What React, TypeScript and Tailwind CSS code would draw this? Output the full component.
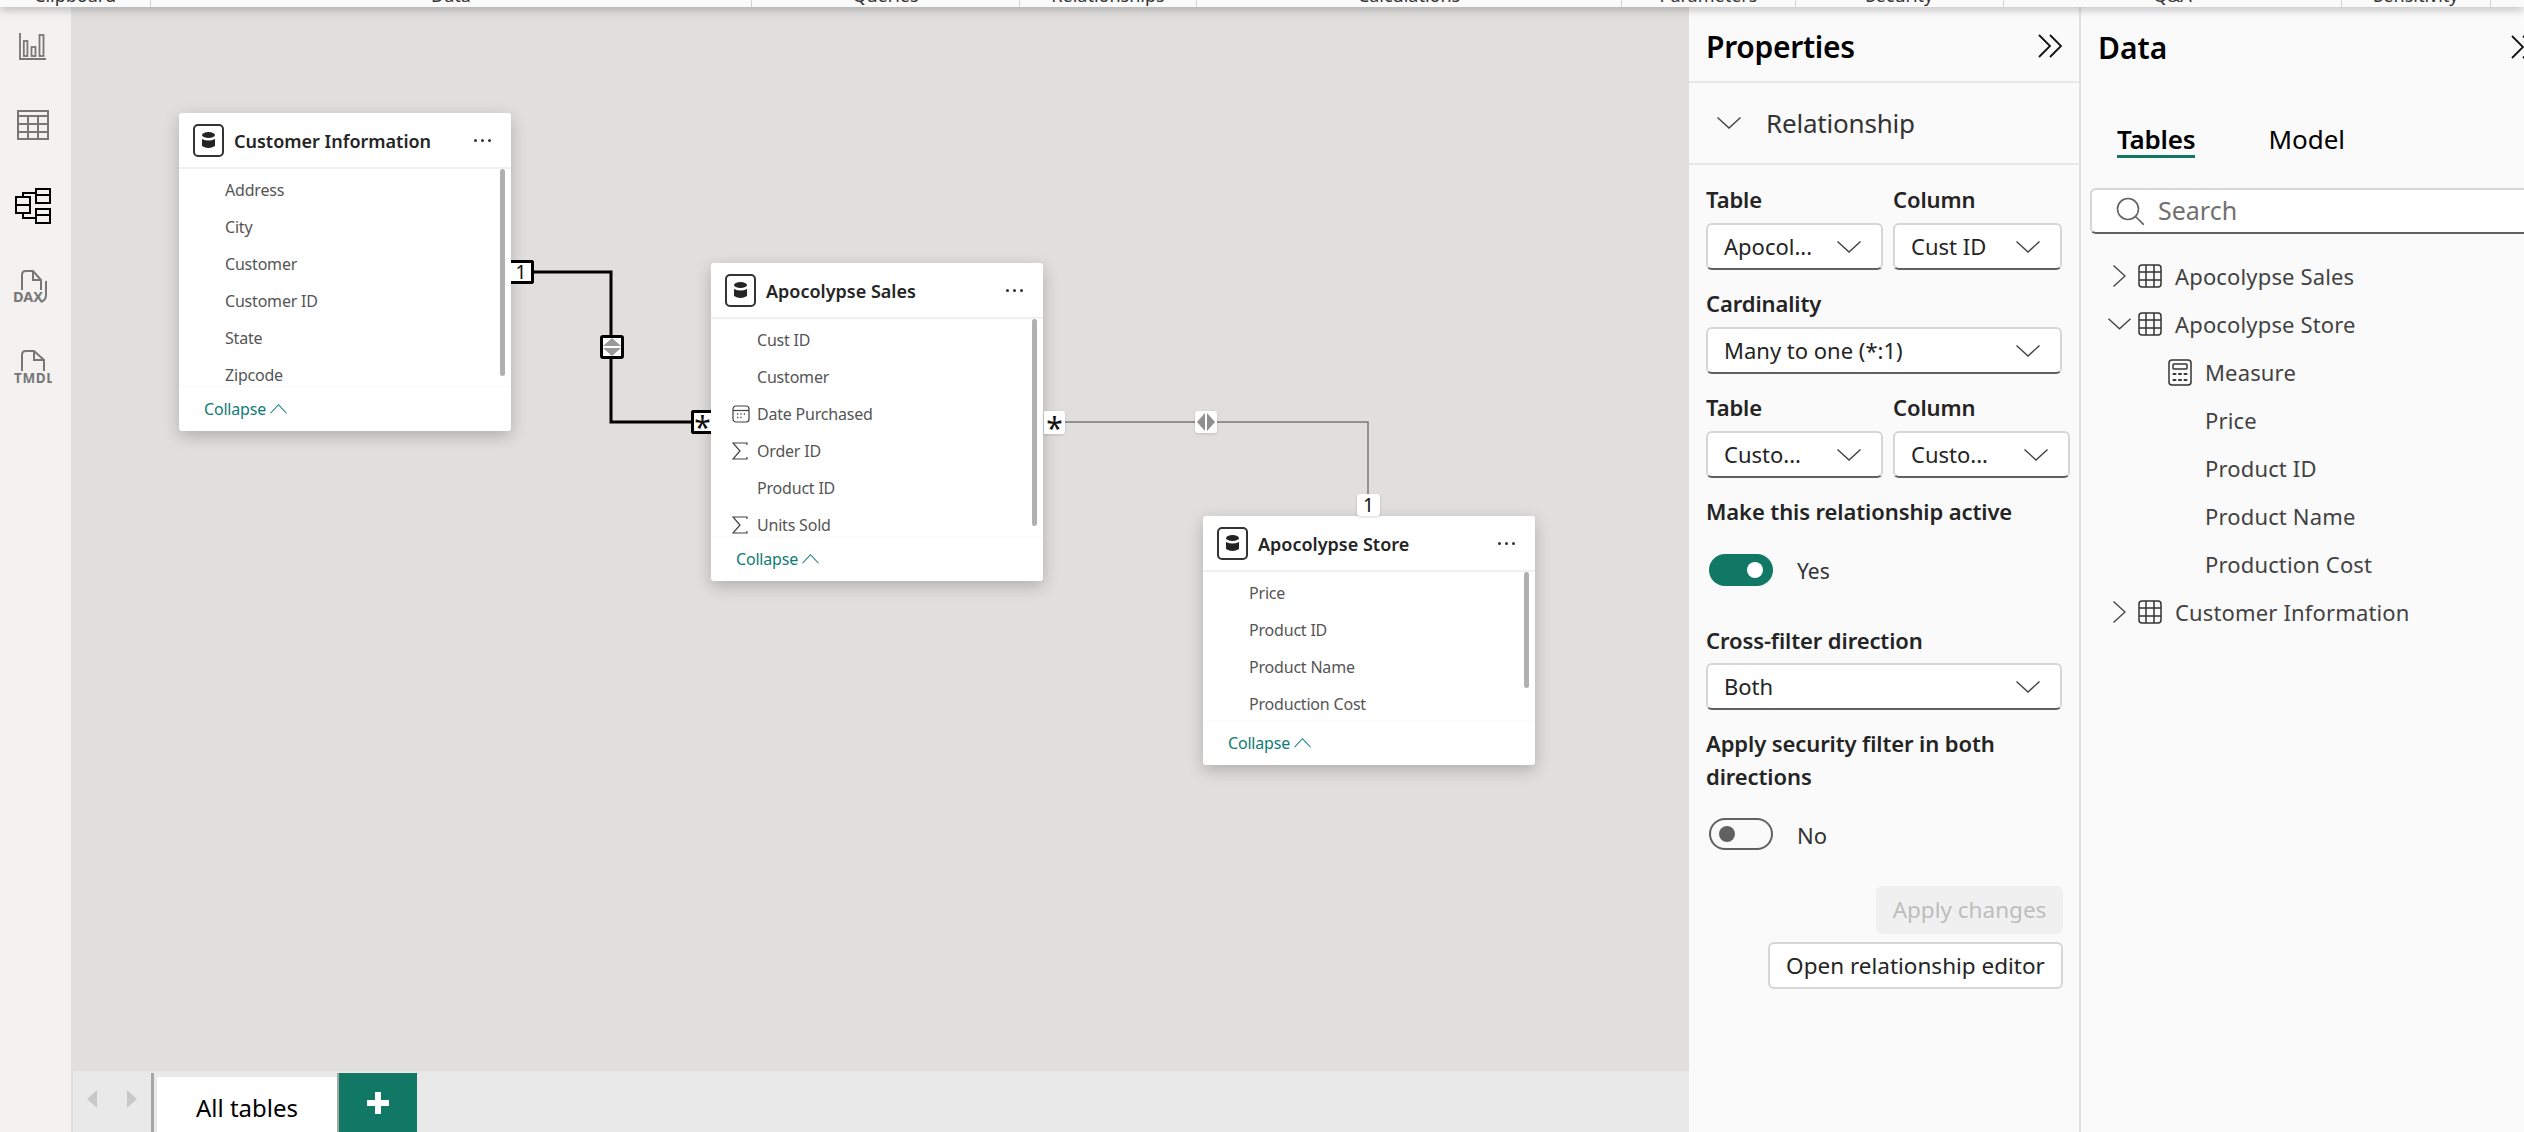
import { ReactNode } from 'react';

const font = '[font-family:"Noto_Sans",sans-serif]';

const ribbonGroups = [
  { label: 'Clipboard', width: 'w-[151px]' },
  { label: 'Data', width: 'w-[601px]' },
  { label: 'Queries', width: 'w-[268px]' },
  { label: 'Relationships', width: 'w-[177px]' },
  { label: 'Calculations', width: 'w-[425px]' },
  { label: 'Parameters', width: 'w-[174px]' },
  { label: 'Security', width: 'w-[208px]' },
  { label: 'Q&A', width: 'w-[338px]' },
  { label: 'Sensitivity', width: 'w-[149px]' },
];

function Chevron({ className = 'w-6 h-3' }: { className?: string }) {
  return (
    <svg viewBox="0 0 24 12" className={className} fill="none" stroke="#424242" strokeWidth="1.4">
      <path d="M0.5 0.5 L12 11 L23.5 0.5" />
    </svg>
  );
}

function ChevronRight() {
  return (
    <svg viewBox="0 0 13 22" className="w-[13px] h-[22px]" fill="none" stroke="#424242" strokeWidth="1.3">
      <path d="M0.5 0.5 L12 11 L0.5 21.5" />
    </svg>
  );
}

function ReportIcon() {
  return (
    <svg viewBox="0 0 27 27" className="w-[27px] h-[27px]" fill="none" stroke="#777" strokeWidth="1.8">
      <path d="M1 0 V26 H27" />
      <rect x="4.8" y="8" width="3.6" height="15" />
      <rect x="12.5" y="14" width="4" height="9" />
      <rect x="20.5" y="2" width="4" height="21" />
    </svg>
  );
}

function TableIcon() {
  return (
    <svg viewBox="0 0 32 30" className="w-8 h-[30px]" fill="none" stroke="#777" strokeWidth="2">
      <rect x="1" y="1" width="30" height="28" />
      <path d="M1 6 H31 M1 14 H31 M1 22 H31 M11 6 V29 M21 6 V29" />
    </svg>
  );
}

function ModelIcon() {
  return (
    <svg viewBox="0 0 36 36" className="w-9 h-9" fill="none" stroke="#000" strokeWidth="2">
      <rect x="1" y="9" width="14" height="16" />
      <path d="M1 17 H15" />
      <rect x="21" y="1" width="14" height="14" />
      <path d="M21 7 H35" />
      <rect x="21" y="21" width="14" height="14" />
      <path d="M21 27 H35" />
      <path d="M8 9 V5 H21 M8 25 V30 H21" />
    </svg>
  );
}

function DaxIcon() {
  return (
    <svg viewBox="0 0 35 33" className="w-[35px] h-[33px]" fill="none" stroke="#777" strokeWidth="2">
      <path d="M9 20 V5 Q9 1 13 1 H20 L28 10 V20 M20 1 V10 H28" />
      <path d="M33 11 V25 Q33 30 28 32" />
      <text x="0" y="32" fontSize="14.5" fontWeight="700" fill="#777" stroke="none" fontFamily="Noto Sans, sans-serif">DAX</text>
    </svg>
  );
}

function TmdlIcon() {
  return (
    <svg viewBox="0 0 38 33" className="w-[38px] h-[33px]" fill="none" stroke="#777" strokeWidth="2">
      <path d="M8 21 V5 Q8 1 12 1 H20 L30 10 V21 M20 1 V10 H30" />
      <text x="0" y="33" fontSize="13.5" fontWeight="700" fill="#777" stroke="none" letterSpacing="0.6" fontFamily="Noto Sans, sans-serif">TMDL</text>
    </svg>
  );
}

function CylinderIcon() {
  return (
    <svg viewBox="0 0 31 33" className="w-[31px] h-[33px] shrink-0" fill="none">
      <rect x="1" y="1" width="29" height="31" rx="4" stroke="#333" strokeWidth="2" />
      <ellipse cx="15.5" cy="11" rx="6.5" ry="3" fill="#242424" />
      <path d="M9 15 Q15.5 18 22 15 V22 Q15.5 26 9 22 Z" fill="#242424" />
    </svg>
  );
}

function SigmaIcon() {
  return (
    <svg viewBox="0 0 16 18" className="w-4 h-[18px]" fill="none" stroke="#424242" strokeWidth="1.2">
      <path d="M15 3 V1 H1 L8 9 L1 17 H15 V15" />
    </svg>
  );
}

function CalendarIcon() {
  return (
    <svg viewBox="0 0 18 18" className="w-[18px] h-[18px]" fill="none" stroke="#424242" strokeWidth="1.2">
      <rect x="1" y="1" width="16" height="16" rx="3" />
      <path d="M1 5.5 H17" />
      <path d="M5 9 h1.2 M8.4 9 h1.2 M11.8 9 h1.2 M5 12.5 h1.2 M8.4 12.5 h1.2" strokeWidth="1.4" />
    </svg>
  );
}

function GridIcon() {
  return (
    <svg viewBox="0 0 24 24" className="w-6 h-6" fill="none" stroke="#333" strokeWidth="1.5">
      <rect x="1" y="1" width="22" height="22" rx="3" />
      <path d="M8 1 V23 M16 1 V23 M1 8 H23 M1 16 H23" />
    </svg>
  );
}

function MeasureIcon() {
  return (
    <svg viewBox="0 0 24 27" className="w-6 h-[27px]" fill="none" stroke="#333" strokeWidth="1.5">
      <rect x="1" y="1" width="22" height="25" rx="3" />
      <rect x="5" y="5" width="14" height="5" rx="1" />
      <path d="M5.5 15 h2 M11 15 h2 M16.5 15 h2 M5.5 21 h2 M11 21 h2 M16.5 21 h2" strokeWidth="2" strokeLinecap="round" />
    </svg>
  );
}

type Field = { name: string; icon?: 'sigma' | 'calendar' };

function TableCard({ title, fields, position, listHeight, scrollHeight }: { title: string; fields: Field[]; position: string; listHeight: string; scrollHeight: string }) {
  return (
    <div className={`absolute w-[332px] bg-white rounded-[3px] shadow-[0_5px_16px_rgba(0,0,0,0.22)] ${position}`}>
      <div className="h-14 flex items-center pl-3.5 border-b-2 border-[#f0f0f0]">
        <CylinderIcon />
        <span className="ml-[10px] mt-[3px] text-[18px] font-semibold text-[#242424]">{title}</span>
        <span className="ml-auto mr-5 flex gap-1">
          <i className="w-[3px] h-[3px] rounded-full bg-[#333]" />
          <i className="w-[3px] h-[3px] rounded-full bg-[#333]" />
          <i className="w-[3px] h-[3px] rounded-full bg-[#333]" />
        </span>
      </div>
      <div className={`relative overflow-hidden pt-[2px] ${listHeight}`}>
        {fields.map((f) => (
          <div key={f.name} className="h-[37px] flex items-center text-[#555] text-[16px] tracking-[-0.2px]">
            <span className="w-[46px] pl-[21px] flex justify-start">
              {f.icon === 'sigma' && <SigmaIcon />}
              {f.icon === 'calendar' && <CalendarIcon />}
            </span>
            {f.name}
          </div>
        ))}
        <div className={`absolute right-[6px] top-0 w-[5px] rounded-full bg-[#b0b0b0] ${scrollHeight}`} />
      </div>
      <div className="h-[45px] flex items-center pl-[25px] gap-1 text-[#0f7b78] text-[16px] tracking-[-0.2px] border-t border-[#fafafa]">
        Collapse
        <svg viewBox="0 0 18 10" className="w-[17px] h-[10px]" fill="none" stroke="#0f7b78" strokeWidth="1.1">
          <path d="M0.5 9.5 L9 0.5 L17.5 9.5" />
        </svg>
      </div>
    </div>
  );
}

function Badge({ position, active, children }: { position: string; active?: boolean; children: ReactNode }) {
  return (
    <div
      className={`absolute flex items-center justify-center overflow-hidden bg-white rounded-[3px] text-[#111] ${
        active ? 'border-[3px] border-black' : 'shadow-[0_1px_3px_rgba(0,0,0,0.15)]'
      } ${position}`}
    >
      {children}
    </div>
  );
}

function FieldLabel({ children, className = '' }: { children: ReactNode; className?: string }) {
  return <div className={`text-[22px] leading-6 font-semibold text-[#242424] tracking-[-0.1px] ${className}`}>{children}</div>;
}

function Select({ value, width }: { value: string; width: string }) {
  return (
    <div className={`h-[47px] ${width} bg-white rounded-md border-2 border-[#d6d6d6] border-b-[#616161] flex items-center justify-between pl-[16px] pr-5 text-[22px] text-[#242424]`}>
      <span>{value}</span>
      <Chevron />
    </div>
  );
}

function TreeRow({ label, arrow, icon, indent }: { label: string; arrow?: 'right' | 'down'; icon?: ReactNode; indent?: boolean }) {
  return (
    <div className="h-12 flex items-center text-[22px] text-[#424242] tracking-[0.15px]">
      <span className="w-[57px] pl-[27px] flex justify-center pr-[7px]">
        {arrow === 'right' && <ChevronRight />}
        {arrow === 'down' && <Chevron className="w-[23px] h-3 shrink-0" />}
      </span>
      {indent ? (
        <span className="w-[30px] ml-[30px] mr-[7px] flex">{icon}</span>
      ) : (
        <span className="w-[37px] flex">{icon}</span>
      )}
      {label}
    </div>
  );
}

export default function App() {
  return (
    <div className={`w-screen h-screen overflow-hidden flex flex-col bg-white ${font}`}>
      <div className="relative z-10 h-[7px] shrink-0 flex overflow-hidden bg-[#fafafa] shadow-[0_2px_10px_rgba(0,0,0,0.3)]">
        {ribbonGroups.map((g) => (
          <div key={g.label} className={`${g.width} shrink-0 h-[7px] border-r border-[#d4d4d4] text-center text-[18px] leading-6 text-[#333]`}>
            <div className="-mt-[17px]">{g.label}</div>
          </div>
        ))}
      </div>

      <div className="flex-1 flex min-h-0">
        <nav className="w-[71px] shrink-0 bg-[#f3f2f1] flex flex-col">
          <div className="h-[79px] pl-[19px] flex items-center"><ReportIcon /></div>
          <div className="h-[78px] pl-[17px] flex items-center"><TableIcon /></div>
          <div className="h-[84px] pl-[15px] flex items-center"><ModelIcon /></div>
          <div className="h-[76px] pl-[13px] flex items-center"><DaxIcon /></div>
          <div className="h-[84px] pl-[14px] flex items-center"><TmdlIcon /></div>
        </nav>

        <main className="w-[1618px] shrink-0 flex flex-col bg-[#e0dfdd]">
          <div className="relative flex-1">
            <svg className="absolute inset-0 w-full h-full" fill="none">
              <path d="M463 265 H540 V415 H625" stroke="#000" strokeWidth="3" />
              <path d="M994 415 H1297 V490" stroke="#777" strokeWidth="1.5" />
            </svg>

            <TableCard
              title="Customer Information"
              position="left-[108px] top-[106px]"
              listHeight="h-[217px]"
              scrollHeight="h-[207px]"
              fields={[{ name: 'Address' }, { name: 'City' }, { name: 'Customer' }, { name: 'Customer ID' }, { name: 'State' }, { name: 'Zipcode' }]}
            />
            <TableCard
              title="Apocolypse Sales"
              position="left-[640px] top-[256px]"
              listHeight="h-[217px]"
              scrollHeight="h-[207px]"
              fields={[
                { name: 'Cust ID' },
                { name: 'Customer' },
                { name: 'Date Purchased', icon: 'calendar' },
                { name: 'Order ID', icon: 'sigma' },
                { name: 'Product ID' },
                { name: 'Units Sold', icon: 'sigma' },
              ]}
            />
            <TableCard
              title="Apocolypse Store"
              position="left-[1132px] top-[509px]"
              listHeight="h-[148px]"
              scrollHeight="h-[116px]"
              fields={[{ name: 'Price' }, { name: 'Product ID' }, { name: 'Product Name' }, { name: 'Production Cost' }]}
            />

            <Badge active position="left-[440px] top-[253px] w-[23px] h-[24px] rounded-l-none border-l-0 text-[19px]">1</Badge>
            <Badge active position="left-[529px] top-[328px] w-[24px] h-[24px]">
              <svg viewBox="0 0 18 18" className="w-[18px] h-[18px] shrink-0" fill="#9a9a9a">
                <path d="M9 0 L18 8 H0 Z M9 18 L18 10 H0 Z" />
              </svg>
            </Badge>
            <Badge active position="left-[620px] top-[403px] w-[20px] h-[24px] rounded-r-none border-r-0 text-[30px] leading-none">
              <span className="mt-[9px]">*</span>
            </Badge>
            <Badge position="left-[973px] top-[404px] w-[21px] h-[23px] rounded-l-none text-[30px] leading-none">
              <span className="mt-[10px]">*</span>
            </Badge>
            <Badge position="left-[1124px] top-[404px] w-[22px] h-[22px]">
              <svg viewBox="0 0 18 18" className="w-[18px] h-[18px]" fill="#8f8f8f">
                <path d="M8 0 V18 L0 9 Z M10 0 V18 L18 9 Z" />
              </svg>
            </Badge>
            <Badge position="left-[1286px] top-[487px] w-[23px] h-[22px] text-[19px]">1</Badge>
          </div>

          <div className="h-[61px] shrink-0 ml-[2px] bg-[#e9e9e9] flex items-end">
            <div className="w-[78px] h-[59px] flex items-center justify-between px-[14px] pb-[8px]">
              <svg viewBox="0 0 10 18" className="w-[10px] h-[18px]" fill="#c8c8c8"><path d="M10 0 V18 L0 9 Z" /></svg>
              <svg viewBox="0 0 10 18" className="w-[10px] h-[18px]" fill="#c8c8c8"><path d="M0 0 V18 L10 9 Z" /></svg>
            </div>
            <div className="w-[3px] h-[59px] bg-[#a6a6a6]" />
            <div className="w-[180px] h-[55px] ml-[3px] pt-[6px] bg-white flex items-center justify-center text-[24px] text-black">All tables</div>
            <div className="w-[2px] h-[59px] bg-[#a6a6a6]" />
            <div className="w-[78px] h-[59px] bg-[#117865] flex items-center justify-center">
              <svg viewBox="0 0 22 22" className="w-[22px] h-[22px]" fill="#fff"><path d="M8 0 H14 V8 H22 V14 H14 V22 H8 V14 H0 V8 H8 Z" /></svg>
            </div>
          </div>
        </main>

        <aside className="w-[392px] shrink-0 bg-[#fafafa] border-r-2 border-[#e1e1e1] flex flex-col">
          <div className="h-[76px] shrink-0 pt-1 border-b-2 border-[#e8e8e8] flex items-center justify-between pl-[17px] pr-4">
            <span className="text-[30px] font-semibold text-black tracking-[-0.3px]">Properties</span>
            <svg viewBox="0 0 25 24" className="w-[25px] h-6" fill="none" stroke="#111" strokeWidth="1.8">
              <path d="M1 1 L12 12 L1 23 M12 1 L23 12 L12 23" />
            </svg>
          </div>
          <div className="h-[82px] shrink-0 border-b-2 border-[#e8e8e8] flex items-center pl-[28px] text-[26px] text-[#333]">
            <Chevron />
            <span className="ml-[25px] tracking-[-0.2px]">Relationship</span>
          </div>

          <div className="px-[17px] pt-[22px]">
            <div className="flex gap-[10px] w-[370px]">
              <div>
                <FieldLabel>Table</FieldLabel>
                <div className="h-[12px]" />
                <Select value="Apocol..." width="w-[177px]" />
              </div>
              <div>
                <FieldLabel>Column</FieldLabel>
                <div className="h-[12px]" />
                <Select value="Cust ID" width="w-[169px]" />
              </div>
            </div>
            <FieldLabel className="mt-[21px]">Cardinality</FieldLabel>
            <Select value="Many to one (*:1)" width="w-[356px] mt-[12px]" />
            <div className="flex gap-[10px] mt-[21px]">
              <div>
                <FieldLabel>Table</FieldLabel>
                <div className="h-[12px]" />
                <Select value="Custo..." width="w-[177px]" />
              </div>
              <div>
                <FieldLabel>Column</FieldLabel>
                <div className="h-[12px]" />
                <Select value="Custo..." width="w-[177px]" />
              </div>
            </div>
            <FieldLabel className="mt-[21px]">Make this relationship active</FieldLabel>
            <div className="flex items-center h-8 mt-[31px] ml-[3px]">
              <div className="w-16 h-8 rounded-full bg-[#117865] flex items-center justify-end pr-[10px]">
                <div className="w-4 h-4 rounded-full bg-white" />
              </div>
              <span className="ml-6 mt-[2px] text-[21px] leading-none text-[#333]">Yes</span>
            </div>
            <FieldLabel className="mt-[42px]">Cross-filter direction</FieldLabel>
            <Select value="Both" width="w-[356px] mt-[11px]" />
            <div className="mt-[17px] text-[22px] leading-[33px] font-semibold text-[#242424] tracking-[-0.1px]">
              Apply security filter in both
              <br />
              directions
            </div>
            <div className="flex items-center h-8 mt-[25px] ml-[3px]">
              <div className="w-16 h-8 rounded-full border-2 border-[#616161] flex items-center pl-2">
                <div className="w-4 h-4 rounded-full bg-[#616161]" />
              </div>
              <span className="ml-6 mt-[2px] text-[22px] leading-none text-[#333]">No</span>
            </div>
            <div className="w-[357px] flex flex-col items-end mt-[36px] gap-2">
              <div className="w-[187px] h-12 rounded-md bg-[#f0f0f0] text-[#bdbdbd] text-[22.5px] flex items-center justify-center">Apply changes</div>
              <div className="w-[295px] h-[47px] rounded-md bg-white border-2 border-[#d6d6d6] text-[#242424] text-[22.5px] flex items-center justify-center">Open relationship editor</div>
            </div>
          </div>
        </aside>

        <section className="flex-1 min-w-0 overflow-hidden bg-[#fafafa]">
          <div className="h-20 flex items-center justify-between pl-[17px] overflow-hidden">
            <span className="text-[30px] font-semibold text-black">Data</span>
            <svg viewBox="0 0 25 24" className="w-[25px] h-6 shrink-0 -mr-3" fill="none" stroke="#111" strokeWidth="1.8">
              <path d="M1 1 L12 12 L1 23 M12 1 L23 12 L12 23" />
            </svg>
          </div>
          <div className="flex pl-9 gap-[73px] h-[24px] mt-[40px] items-center text-[26px]">
            <div className="relative font-semibold text-black tracking-[-0.2px]">
              Tables
              <div className="absolute left-0 right-0 top-[35px] h-[3px] bg-[#117865]" />
            </div>
            <div className="text-black">Model</div>
          </div>
          <div className="w-[500px] ml-[9px] mt-[37px] h-[46px] bg-white rounded-md border-2 border-[#d6d6d6] border-b-[#616161] flex items-center pl-6">
            <svg viewBox="0 0 28 28" className="w-7 h-7" fill="none" stroke="#616161" strokeWidth="1.6">
              <circle cx="12" cy="12" r="10.5" />
              <path d="M19.5 19.5 L28 28" />
            </svg>
            <span className="ml-[14px] text-[25px] text-[#707070]">Search</span>
          </div>
          <div className="mt-[18px]">
            <TreeRow label="Apocolypse Sales" arrow="right" icon={<GridIcon />} />
            <TreeRow label="Apocolypse Store" arrow="down" icon={<GridIcon />} />
            <TreeRow label="Measure" indent icon={<MeasureIcon />} />
            <TreeRow label="Price" indent />
            <TreeRow label="Product ID" indent />
            <TreeRow label="Product Name" indent />
            <TreeRow label="Production Cost" indent />
            <TreeRow label="Customer Information" arrow="right" icon={<GridIcon />} />
          </div>
        </section>
      </div>
    </div>
  );
}
